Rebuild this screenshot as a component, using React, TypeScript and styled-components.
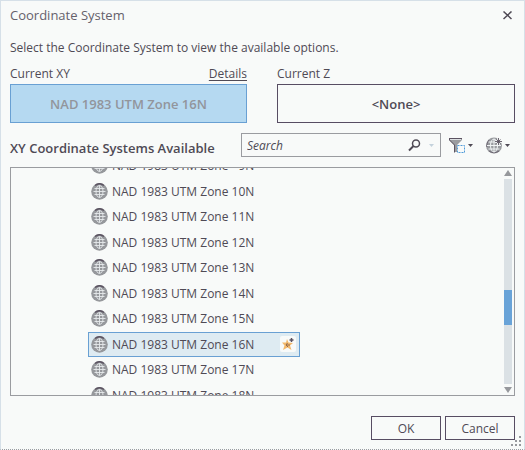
import React, { useState } from "react";
import styled, { createGlobalStyle } from "styled-components";

const ink = "#4f4a55";
const paper = "#f8faf9";

const GlobalStyle = createGlobalStyle`
  * { box-sizing: border-box; }
  html, body { margin: 0; padding: 0; }
  body, button, input {
    font-family: "Open Sans", "Noto Sans", sans-serif;
    font-size: 12px;
    color: ${ink};
  }
`;

const Dialog = styled.main`
  display: flex;
  flex-direction: column;
  min-height: 100vh;
  padding: 4px 9px 9px;
  border: 1px solid #d6e0e8;
  border-bottom: 1px dotted #9a9da2;
  background: ${paper};
`;

const TitleBar = styled.header`
  display: flex;
  align-items: center;
  justify-content: space-between;
  height: 20px;
`;

const Title = styled.h1`
  margin: 0;
  font-size: 13px;
  font-weight: 400;
  line-height: 20px;
  color: #65616b;
`;

const IconButton = styled.button`
  display: flex;
  align-items: center;
  padding: 0;
  border: 0;
  background: none;
  cursor: pointer;
`;

const Intro = styled.p`
  margin: 14px 0 0;
  line-height: 18px;
`;

const Choices = styled.section`
  display: grid;
  grid-template-columns: 237fr 238fr;
  gap: 30px;
  margin: 8px 0 0;
`;

const Choice = styled.div`
  display: flex;
  flex-direction: column;
`;

const ChoiceHead = styled.div`
  display: flex;
  justify-content: space-between;
  height: 19px;
  line-height: 18px;
`;

const DetailsLink = styled.a`
  color: inherit;
  text-decoration: underline;
  text-underline-offset: 2px;
`;

const ChoiceButton = styled.button<{ $selected?: boolean }>`
  height: 39px;
  border: 1px solid ${(p) => (p.$selected ? "#69a0d3" : "#574d63")};
  background: ${(p) => (p.$selected ? "#b5d9f1" : paper)};
  color: ${(p) => (p.$selected ? "#92959c" : ink)};
  font-size: 13px;
  font-weight: 600;
  cursor: pointer;
`;

const Toolbar = styled.div`
  display: flex;
  align-items: center;
  height: 24px;
  margin-top: 10px;
`;

const Heading = styled.h2`
  flex: 1;
  margin: 0;
  padding-top: 6px;
  font-size: 13px;
  font-weight: 600;
  line-height: 18px;
  white-space: nowrap;
`;

const SearchBox = styled.label`
  display: flex;
  align-items: center;
  width: 200px;
  height: 24px;
  padding: 0 6px 0 5px;
  border: 1px solid #9a9ca0;
`;

const SearchInput = styled.input`
  flex: 1;
  min-width: 0;
  padding: 0;
  border: 0;
  outline: 0;
  background: none;
  font-style: italic;
  &::placeholder { color: ${ink}; opacity: 1; }
`;

const Tools = styled.div`
  display: flex;
  gap: 13px;
  margin: 0 5px 0 8px;
`;

const ListFrame = styled.section`
  display: flex;
  flex: 1 1 0;
  min-height: 0;
  margin-top: 10px;
  border: 1px solid #9a9ca0;
`;

const Viewport = styled.div`
  display: flex;
  flex: 1;
  min-height: 0;
  overflow: hidden;
`;

const SystemList = styled.ul`
  display: flex;
  flex-direction: column;
  width: 212px;
  margin: -15px 0 -13px 77px;
  padding: 0;
  list-style: none;
`;

const SystemItem = styled.li`
  display: flex;
  flex: 1 0 25px;
`;

const SystemButton = styled.button<{ $selected: boolean }>`
  display: flex;
  flex: 1;
  align-items: center;
  gap: 4px;
  padding: 0 3px 0 2px;
  border: 1px solid ${(p) => (p.$selected ? "#69a0d3" : "transparent")};
  background: ${(p) => (p.$selected ? "#deebf2" : "transparent")};
  text-align: left;
  white-space: nowrap;
  cursor: pointer;
`;

const SystemName = styled.span`
  flex: 1;
`;

const Favorite = styled.span`
  display: flex;
  align-items: center;
  justify-content: center;
  width: 16px;
  height: 16px;
  border-radius: 2px;
  background: ${paper};
`;

const Scrollbar = styled.div`
  display: flex;
  flex-direction: column;
  align-items: center;
  gap: 3px;
  width: 8px;
  margin: 2px 2px 2px 0;
`;

const Track = styled.div`
  flex: 1;
  display: grid;
  grid-template-rows: 112fr 35fr 59fr;
  width: 8px;
  background: #dbe1e5;
`;

const Thumb = styled.div`
  grid-row: 2;
  background: #69a3d8;
`;

const Footer = styled.footer`
  display: flex;
  justify-content: flex-end;
  gap: 4px;
  margin-top: 20px;
`;

const ActionButton = styled.button`
  width: 70px;
  height: 24px;
  padding: 0;
  border: 1px solid #574d63;
  background: ${paper};
  cursor: pointer;
`;

const Grip = styled.svg`
  position: absolute;
  right: 3px;
  bottom: 3px;
`;

const Frame = styled.div`
  position: relative;
`;

const Globe = () => (
  <svg width="17" height="17" viewBox="0 0 17 17" fill="none" aria-hidden="true">
    <circle cx="8.5" cy="8.5" r="8.3" fill="#96989c" />
    <path d="M4 2.5Q8.500 -1 13 2.5" stroke="#5b5361" strokeWidth="1.5" />
    <g stroke="#e6eaec" strokeWidth=".9">
      <ellipse cx="8.5" cy="8.5" rx="3.5" ry="6" />
      <path d="M8.5 2.500V14.500M2.500 8.500H14.500M3.500 5.500H13.500M3.500 11.500H13.500" />
    </g>
  </svg>
);

const FilterIcon = () => (
  <svg width="24" height="17" viewBox="0 0 24 17" aria-hidden="true">
    <path d="M0 1H13V3L8 8V15H5V8L0 3Z" fill="#9a9ca0" />
    <path d="M0 1.5H13M.5 2V3L5.5 8V15.5" fill="none" stroke="#5b5361" />
    <path d="M1 2.5H12" stroke="#dde0e2" />
    <rect x="8.500" y="8.500" width="7" height="7" fill={paper} stroke="#4f9bd9" strokeDasharray="2 1" />
    <path d="M19 7H24L21.5 10Z" fill={ink} />
  </svg>
);

const AddGlobeIcon = () => (
  <svg width="24" height="17" viewBox="0 0 24 17" fill="none" aria-hidden="true">
    <circle cx="8" cy="8.5" r="8" fill="#9a9ca0" />
    <path d="M3 3Q.5 6 .8 10M3 14Q8 17.5 13 14" stroke="#6a6470" />
    <g stroke="#f1f4f5">
      <ellipse cx="8" cy="8.5" rx="3.5" ry="6.5" />
      <path d="M8 2V15M1 8.5H15M2.5 5H13M2.5 12H13.5" />
    </g>
    <path d="M12.5 .5V8M9 4.5H16" stroke={paper} strokeWidth="2.5" />
    <path d="M12.5 1V8M9 4.5H16M10.5 2.5L14.5 6.5M14.5 2.5L10.5 6.5" stroke="#5b5361" strokeWidth=".9" />
    <path d="M19 7H24L21.5 10Z" fill={ink} />
  </svg>
);

const StarIcon = () => (
  <svg width="14" height="14" viewBox="0 0 14 14" aria-hidden="true">
    <path d="M6 2L7.500 5.500L12 6L9 8.500L10.500 13L6.500 10.500L2 13L3.500 8.500L1 5.500H5Z" fill="#f3b96c" />
    <path d="M6.500 6L5 8L7 10M5 8H9" stroke="#93694a" fill="none" />
    <path d="M10.500 1V5M8.500 3H12.500" stroke="#5b5361" strokeWidth="1.500" />
  </svg>
);

const zones = [9, 10, 11, 12, 13, 14, 15, 16, 17, 18];

export default function App() {
  const [zone, setZone] = useState(16);
  return (
    <Frame>
      <GlobalStyle />
      <Dialog>
        <TitleBar>
          <Title>Coordinate System</Title>
          <IconButton aria-label="Close">
            <svg width="12" height="9" viewBox="0 0 12 9" aria-hidden="true">
              <path d="M.5 .5L8.500 8M8.500 .5L.5 8" stroke={ink} strokeWidth="1.500" />
            </svg>
          </IconButton>
        </TitleBar>
        <Intro>Select the Coordinate System to view the available options.</Intro>
        <Choices>
          <Choice>
            <ChoiceHead>
              <span id="xy">Current XY</span>
              <DetailsLink href="#details">Details</DetailsLink>
            </ChoiceHead>
            <ChoiceButton $selected aria-describedby="xy">NAD 1983 UTM Zone {zone}N</ChoiceButton>
          </Choice>
          <Choice>
            <ChoiceHead>
              <span id="z">Current Z</span>
            </ChoiceHead>
            <ChoiceButton aria-describedby="z">&lt;None&gt;</ChoiceButton>
          </Choice>
        </Choices>
        <Toolbar>
          <Heading>XY Coordinate Systems Available</Heading>
          <SearchBox>
            <SearchInput type="text" placeholder="Search" aria-label="Search" />
            <svg width="26" height="13" viewBox="0 0 26 13" fill="none" aria-hidden="true">
              <circle cx="8" cy="4.500" r="3.500" stroke={ink} strokeWidth="1.500" />
              <path d="M5.500 7L1 11.500" stroke={ink} strokeWidth="2" />
              <path d="M21 5H26L23.500 8Z" fill="#c4d2dc" />
            </svg>
          </SearchBox>
          <Tools>
            <IconButton aria-label="Filter"><FilterIcon /></IconButton>
            <IconButton aria-label="Add coordinate system"><AddGlobeIcon /></IconButton>
          </Tools>
        </Toolbar>
        <ListFrame>
          <Viewport>
            <SystemList>
              {zones.map((n) => (
                <SystemItem key={n}>
                  <SystemButton $selected={n === zone} aria-pressed={n === zone} onClick={() => setZone(n)}>
                    <Globe />
                    <SystemName>NAD 1983 UTM Zone {n === 9 ? "\u20079" : n}N</SystemName>
                    {n === zone && <Favorite><StarIcon /></Favorite>}
                  </SystemButton>
                </SystemItem>
              ))}
            </SystemList>
          </Viewport>
          <Scrollbar>
            <svg width="8" height="6" viewBox="0 0 8 6" aria-hidden="true"><path d="M4 0L8 6H0Z" fill="#96989c" /></svg>
            <Track><Thumb /></Track>
            <svg width="8" height="6" viewBox="0 0 8 6" aria-hidden="true"><path d="M0 0H8L4 6Z" fill="#96989c" /></svg>
          </Scrollbar>
        </ListFrame>
        <Footer>
          <ActionButton>OK</ActionButton>
          <ActionButton>Cancel</ActionButton>
        </Footer>
      </Dialog>
      <Grip width="11" height="11" viewBox="0 0 11 11" fill="#96989c" aria-hidden="true">
        <path d="M8 0h2v2h-2zM4 4h2v2h-2zM8 4h2v2h-2zM0 8h2v2h-2zM4 8h2v2h-2zM8 8h2v2h-2z" />
      </Grip>
    </Frame>
  );
}
